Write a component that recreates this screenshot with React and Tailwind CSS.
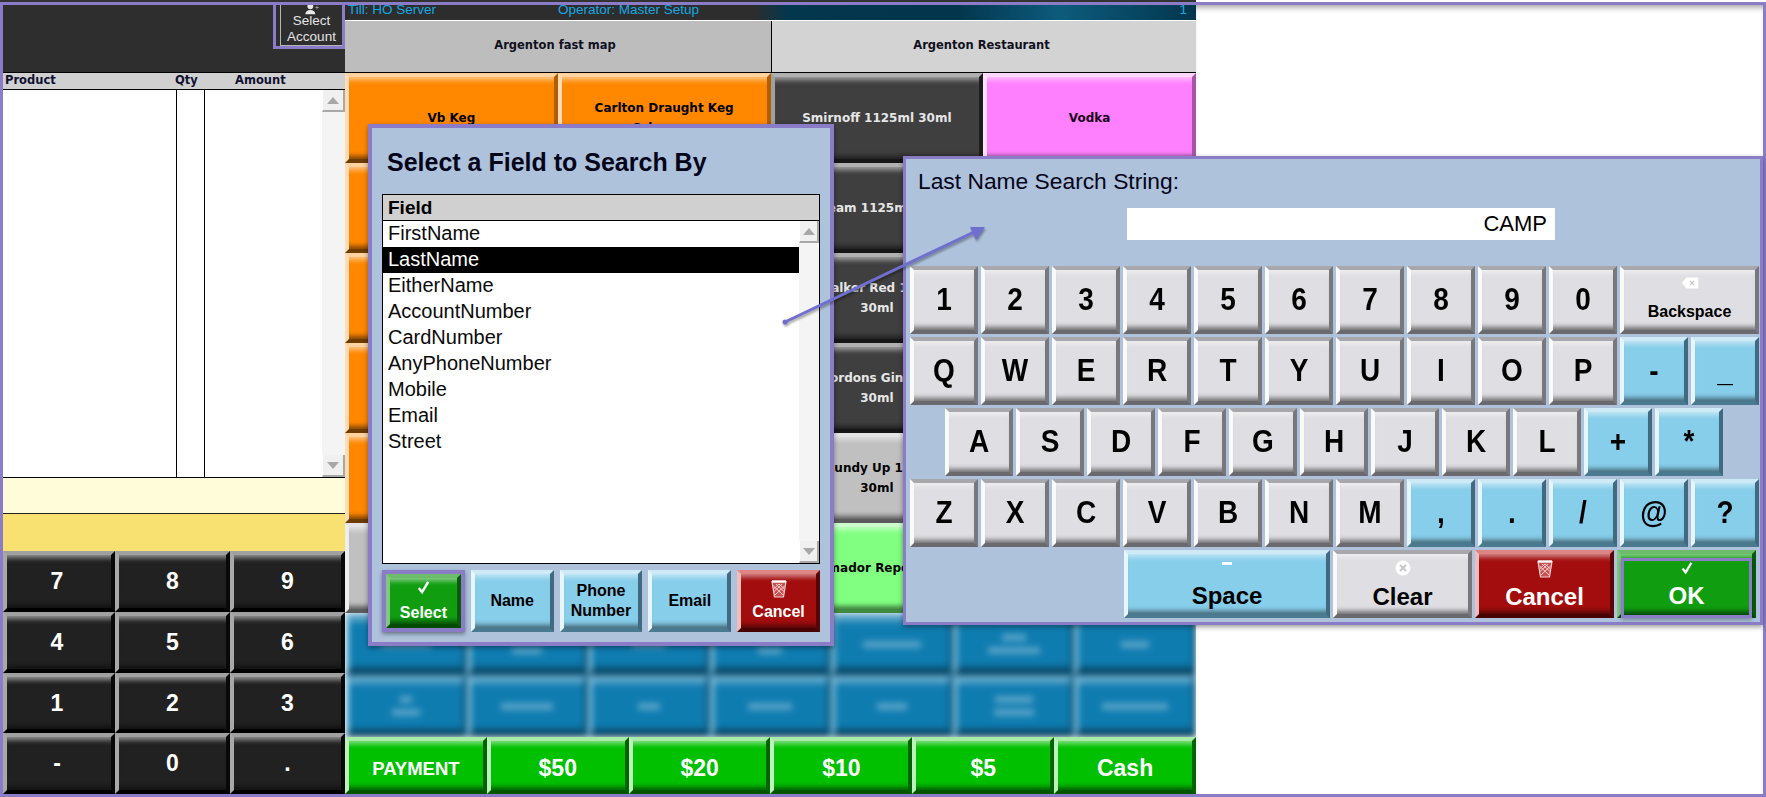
import React from 'react';

const sans = "font-['Liberation_Sans',Arial,sans-serif]";
const verdana = "font-['DejaVu_Sans',Verdana,sans-serif]";

// bevel colours per button type, border mitres give the corners
const bevels = {
  orange: 'bg-[#ff8800] border-t-[#ffd2a0] border-l-[#ffdcb4] border-r-[#b05e00] border-b-[#6e3b00] text-black',
  dark: 'bg-[#3f3f3f] border-t-[#b0b0b0] border-l-[#a0a0a0] border-r-[#1c1c1c] border-b-[#161616] text-[#e6e6e6]',
  magenta: 'bg-[#ff80ff] border-t-[#ffd8ff] border-l-[#ffe0ff] border-r-[#a855a8] border-b-[#a855a8] text-[#1a001a]',
  grey: 'bg-[#c0c0c0] border-t-[#e4e4e4] border-l-[#eeeeee] border-r-[#707070] border-b-[#5c5c5c] text-black',
  mint: 'bg-[#80ff80] border-t-[#ccffcc] border-l-[#d8ffd8] border-r-[#55a855] border-b-[#3f8a3f] text-black',
  black: 'bg-[#212121] border-t-[#a0a0a0] border-l-[#a8a8a8] border-r-[#080808] border-b-[#000000] text-white',
  blue: 'bg-[#0f7cb0] border-t-[#5ea5c8] border-l-[#8fc6e0] border-r-[#0a5478] border-b-[#063f5c] text-white',
  green: 'bg-[#00c000] border-t-[#a6eba6] border-l-[#bdf2bd] border-r-[#006400] border-b-[#005500] text-white',
  sky: 'bg-[#87ceeb] border-t-[#cdeaf6] border-l-[#e6f6fc] border-r-[#3f6a80] border-b-[#4a7a90] text-black',
  red: 'bg-[#a30d0d] border-t-[#dd8585] border-l-[#f0bcbc] border-r-[#5a0505] border-b-[#470303] text-white',
  ok: 'bg-[#109e10] border-t-[#6cbc6c] border-l-[#80c880] border-r-[#075c07] border-b-[#054d05] text-white',
  key: 'bg-[#dfdfe3] border-t-[#a8a8ac] border-l-[#fafafa] border-r-[#77777c] border-b-[#6a6a6e] text-black',
};

const softEdge = 'shadow-[inset_0_7px_5px_-4px_rgba(255,255,255,0.5),inset_0_-7px_5px_-4px_rgba(0,0,0,0.5)]';

const Bevel = ({ kind, className = '', children }) => (
  <div className={`relative flex flex-col items-center justify-center text-center border-[4px] ${softEdge} ${bevels[kind]} ${className}`}>
    {children}
  </div>
);

const Triangle = ({ down }) => (
  <svg width="12" height="7" viewBox="0 0 12 7">
    <polygon points={down ? '0,0 12,0 6,7' : '6,0 12,7 0,7'} fill="#a8a8a8" />
  </svg>
);

const Scrollbar = ({ width = 'w-[23px]' }) => (
  <div className={`${width} shrink-0 flex flex-col bg-[#f4f4f4]`}>
    <div className="h-[22px] flex items-center justify-center bg-[#f0f0f0] border-r-2 border-b-2 border-[#a8a8a8] border-l border-l-white">
      <Triangle />
    </div>
    <div className="flex-1" />
    <div className="h-[22px] flex items-center justify-center bg-[#f0f0f0] border-r-2 border-b-2 border-[#a8a8a8] border-l border-l-white">
      <Triangle down />
    </div>
  </div>
);

const TrashIcon = () => (
  <svg width="16" height="18" viewBox="0 0 16 18" fill="none" stroke="#f6d0d0" strokeWidth="1.2">
    <path d="M1 1.500h14l-2.500 15.500h-9z" fill="#c85050" />
    <path d="M1 1.500h14" strokeWidth="2.400" stroke="#ffffff" />
    <path d="M2.500 6l9.500 9M5 4l8.500 8M8 4l5.500 5M13.500 6l-9.500 9M11 4l-8.500 8M8 4l-5.500 5" strokeWidth="1" />
  </svg>
);

const Check = ({ size = 16 }) => (
  <svg width={size} height={size} viewBox="0 0 16 16" fill="none" stroke="#ffffff" strokeWidth="2.6">
    <path d="M3 8.500l3.500 4.500 6.500-11" />
  </svg>
);

const BackspaceIcon = () => (
  <svg width="18" height="14" viewBox="0 0 26 18">
    <path d="M8 1h17v16H8L1 9z" fill="#ffffff" />
    <path d="M13 6l6 6M19 6l-6 6" stroke="#c4c4c8" strokeWidth="1.800" />
  </svg>
);

const ClearIcon = () => (
  <svg width="16" height="16" viewBox="0 0 16 16">
    <circle cx="8" cy="8" r="7.500" fill="#ffffff" />
    <path d="M5 5l6 6M11 5l-6 6" stroke="#c4c4c8" strokeWidth="1.800" />
  </svg>
);

const UserPlusIcon = () => (
  <svg width="16" height="12" viewBox="0 0 16 12" fill="#e8e8e8">
    <circle cx="6" cy="1.500" r="3.500" />
    <path d="M0 11c0-3 2.500-5 6-5s6 2 6 5z" />
    <path d="M12 2.500h4v1h-4zM13.500 1h1v4h-1z" fill="#9a9a9a" />
  </svg>
);

// kind, first line, nudge of the first line, second line
const tiles = [
  ['orange', 'Vb Keg'], ['orange', 'Carlton Draught Keg Schooner'], ['dark', 'Smirnoff 1125ml 30ml'], ['magenta', 'Vodka'],
  ['orange', ''], ['orange', ''], ['dark', 'Jim Beam 1125ml 30ml', 'pr-[12px]'], ['dark', ''],
  ['orange', ''], ['orange', ''], ['dark', 'Walker Red 1125ml', 'pl-[14px]', '30ml'], ['dark', ''],
  ['orange', ''], ['orange', ''], ['dark', 'Gordons Gin 1125ml', 'pl-[24px]', '30ml'], ['dark', ''],
  ['orange', ''], ['orange', ''], ['grey', 'Bundy Up 1125ml', 'pl-[16px]', '30ml'], ['grey', ''],
  ['grey', ''], ['grey', ''], ['mint', 'Amador Reposado', 'pl-[6px]'], ['mint', ''],
];

// the labels of this band are blurred out in the picture, so only soft bars are drawn
const blurredLabels = [
  [[50], [48, 30], [34], [30, 24], [58], [24, 52], [28]],
  [[12, 28], [52], [22], [44], [30], [38, 40], [66]],
];

const fields = ['FirstName', 'LastName', 'EitherName', 'AccountNumber', 'CardNumber', 'AnyPhoneNumber', 'Mobile', 'Email', 'Street'];

const keyRows = [
  { pad: '', keys: '1234567890'.split('').map((k) => [k, 'key']) },
  { pad: '', keys: [...'QWERTYUIOP'.split('').map((k) => [k, 'key']), ['-', 'sky'], ['_', 'sky']] },
  { pad: 'ml-[35px]', keys: [...'ASDFGHJKL'.split('').map((k) => [k, 'key']), ['+', 'sky'], ['*', 'sky']] },
  { pad: '', keys: [...'ZXCVBNM'.split('').map((k) => [k, 'key']), ...',./@?'.split('').map((k) => [k, 'sky'])] },
];

const SideTable = () => (
  <>
    <div className="h-[68px] shrink-0 bg-[#2e2e2e] border-b border-black flex justify-end items-start">
      <div className="w-[72px] h-[44px] border-[3px] border-t-0 border-[#8b7cc8]">
        <div className={`h-full ml-[4px] border-l border-b border-[#b5b5b5] text-[#e4e4e4] text-[13.5px] leading-[16px] text-center flex flex-col items-center ${sans}`}>
          <UserPlusIcon />
          <span className="-mt-[2px]">Select</span>
          <span>Account</span>
        </div>
      </div>
    </div>
    <div className={`h-[17px] shrink-0 bg-[#d0d0d0] border-b border-black flex items-center pl-[2px] text-[11.500px] font-bold text-[#101030] ${verdana}`}>
      <span className="w-[170px]">Product</span>
      <span className="w-[60px]">Qty</span>
      <span>Amount</span>
    </div>
    <div className="h-[388px] shrink-0 bg-white border-b border-black flex">
      <div className="w-[174px] border-r border-black" />
      <div className="w-[28px] border-r border-black" />
      <div className="flex-1" />
      <Scrollbar />
    </div>
    <div className="h-[36px] shrink-0 bg-[#fffcd9] border-b border-[#222]" />
    <div className="h-[37px] shrink-0 bg-[#f8e071]" />
    <div className={`flex-1 grid grid-cols-[112px_115px_115px] grid-rows-4 text-[23px] font-bold ${sans}`}>
      {['7', '8', '9', '4', '5', '6', '1', '2', '3', '-', '0', '.'].map((k, i) => (
        <Bevel key={k} kind="black" className={i % 3 === 0 ? 'pr-[4px]' : ''}>{k}</Bevel>
      ))}
    </div>
  </>
);

const Center = () => (
  <>
    <div className={`h-[15px] shrink-0 overflow-hidden flex items-center pb-[4px] bg-[linear-gradient(to_right,#2d2d2d_0%,#2d2d2d_48%,#03374e_52%,#03364d_72%,#0d5b7c_84%,#03364d_100%)] text-[#18a8e0] text-[13.5px] ${sans}`}>
      <span className="w-[213px] pl-[3px]">Till: HO Server</span>
      <span className="flex-1">Operator: Master Setup</span>
      <span className="pr-[9px]">1</span>
    </div>
    <div className={`h-[53px] shrink-0 flex text-[11.500px] font-bold border-t border-white border-b border-b-black text-[#101020] ${verdana}`}>
      <div className="w-[427px] bg-[#bdbdbd] flex items-center justify-center border-r border-black pb-[2px] pr-[6px]">Argenton fast map</div>
      <div className="flex-1 bg-[#d3d3d3] flex items-center justify-center pb-[2px] pr-[5px]">Argenton Restaurant</div>
    </div>
    <div className={`h-[540px] shrink-0 grid grid-cols-4 grid-rows-6 text-[12px] leading-[20px] font-bold ${verdana}`}>
      {tiles.map(([kind, label, nudge = '', second], i) => (
        <Bevel key={i} kind={kind}>
          <span className={nudge}>{label}</span>
          {second && <span>{second}</span>}
        </Bevel>
      ))}
    </div>
    <div className="h-[124px] shrink-0 overflow-hidden">
      <div className="h-full grid grid-cols-7 grid-rows-2 blur-[3px]">
        {blurredLabels.flat().map((lines, i) => (
          <Bevel key={i} kind="blue" className="gap-[6px]">
            {lines.map((w, j) => (
              <div key={j} className="h-[7px] bg-white/30" style={{ width: w }} />
            ))}
          </Bevel>
        ))}
      </div>
    </div>
    <div className={`flex-1 grid grid-cols-6 font-bold text-[23px] ${sans}`}>
      <Bevel kind="green" className="pt-[6px]"><span className="text-[18.500px]">PAYMENT</span></Bevel>
      {['$50', '$20', '$10', '$5', 'Cash'].map((t) => (
        <Bevel key={t} kind="green" className="pt-[6px]">{t}</Bevel>
      ))}
    </div>
  </>
);

const FieldDialog = () => (
  <div className={`absolute left-[368px] top-[124px] w-[466px] h-[522px] bg-[#aec2dc] border-[4px] border-[#8b7cc8] shadow-[0_2px_5px_rgba(0,0,0,0.4)] px-[10px] ${sans}`}>
    <div className="mt-[20px] h-[28px] mb-[18px] pl-[5px] text-[25px] leading-[28px] font-bold text-[#05051a]">Select a Field to Search By</div>
    <div className="h-[370px] border border-black bg-white flex flex-col">
      <div className="h-[26px] shrink-0 bg-[#d0d0d0] border-b border-black pl-[5px] text-[19px] leading-[25px] font-bold text-black">Field</div>
      <div className="flex-1 flex min-h-0">
        <div className="flex-1 text-[20px] leading-[24px] text-[#0a0a0a]">
          {fields.map((f) => (
            <div key={f} className={`h-[26px] pl-[5px] ${f === 'LastName' ? 'bg-black text-white' : ''}`}>{f}</div>
          ))}
        </div>
        <Scrollbar width="w-[20px]" />
      </div>
    </div>
    <div className="mt-[6px] h-[62px] flex gap-[6px] text-[16px] font-bold leading-[20px]">
      <div className="w-[83px] border-[4px] border-[#8b7cc8] shadow-[0_2px_4px_rgba(0,0,0,0.4)]">
        <Bevel kind="ok" className="h-full">
          <Check size={15} />
          <span className="mt-[8px]">Select</span>
        </Bevel>
      </div>
      <Bevel kind="sky" className="w-[83px]">Name</Bevel>
      <Bevel kind="sky" className="w-[83px]">Phone Number</Bevel>
      <Bevel kind="sky" className="w-[83px]">Email</Bevel>
      <Bevel kind="red" className="w-[83px]">
        <TrashIcon />
        <span className="mt-[4px]">Cancel</span>
      </Bevel>
    </div>
  </div>
);

const KeyboardDialog = () => (
  <div className={`absolute left-[903px] top-[156px] w-[860px] h-[469px] bg-[#aec2dc] border-[3px] border-[#8b7cc8] shadow-[0_2px_5px_rgba(0,0,0,0.4)] ${sans}`}>
    <div className="pl-[12px] pt-[8px] h-[49px] text-[22.800px] leading-[28px] text-[#05051a]">Last Name Search String:</div>
    <div className="ml-[221px] w-[428px] h-[32px] bg-white text-right pr-[8px] text-[22px] leading-[32px] text-black">CAMP</div>
    <div className="mt-[26px] ml-[4px] flex flex-col gap-[3px] text-[28px] font-bold">
      {keyRows.map((row, r) => (
        <div key={r} className={`h-[68px] flex gap-[3px] ${row.pad}`}>
          {row.keys.map(([k, kind]) => (
            <Bevel key={k} kind={kind} className="w-[68px]">
              <span className="inline-block scale-y-110">{k}</span>
            </Bevel>
          ))}
          {r === 0 && (
            <Bevel kind="key" className="w-[139px] text-[16px]">
              <BackspaceIcon />
              <span className="mt-[10px]">Backspace</span>
            </Bevel>
          )}
        </div>
      ))}
      <div className="h-[68px] ml-[214px] flex gap-[3px] text-[24px] leading-[28px]">
        <Bevel kind="sky" className="w-[206px] pt-[3px]">
          <div className="w-[10px] h-[3px] bg-white mb-[17px]" />
          Space
        </Bevel>
        <Bevel kind="key" className="w-[139px] pt-[3px]">
          <ClearIcon />
          <span className="mt-[7px]">Clear</span>
        </Bevel>
        <Bevel kind="red" className="w-[139px] pt-[3px]">
          <TrashIcon />
          <span className="mt-[5px]">Cancel</span>
        </Bevel>
        <Bevel kind="ok" className="w-[139px] pt-[3px]">
          <Check size={14} />
          <span className="mt-[7px]">OK</span>
          <div className="absolute left-0 right-0 top-[4px] -bottom-[4px] border-[3px] border-[#8b7cc8] shadow-[0_2px_4px_rgba(0,0,0,0.3)]" />
        </Bevel>
      </div>
    </div>
  </div>
);

const LinkArrow = () => (
  <svg className="absolute left-0 top-0 drop-shadow-[1px_2px_1px_rgba(0,0,0,0.35)]" width="1766" height="797">
    <circle cx="785" cy="322" r="2.500" fill="#6f6fd0" />
    <line x1="785" y1="322" x2="974" y2="232" stroke="#6f6fd0" strokeWidth="3" />
    <polygon points="985,227 976,240 970,227" fill="#6f6fd0" />
  </svg>
);

export default function App() {
  return (
    <div className="relative w-[1766px] h-[797px] overflow-hidden bg-white flex flex-col">
      <div className="h-[2px] shrink-0 w-[1196px] bg-[#333]" />
      <div className="flex-1 min-h-0 border-[3px] border-[#8b7cc8] flex">
        <div className="w-[342px] shrink-0 flex flex-col"><SideTable /></div>
        <div className="w-[851px] shrink-0 flex flex-col"><Center /></div>
        <div className="flex-1 bg-white shadow-[inset_0_6px_6px_-4px_#999]" />
      </div>
      <FieldDialog />
      <KeyboardDialog />
      <LinkArrow />
    </div>
  );
}
